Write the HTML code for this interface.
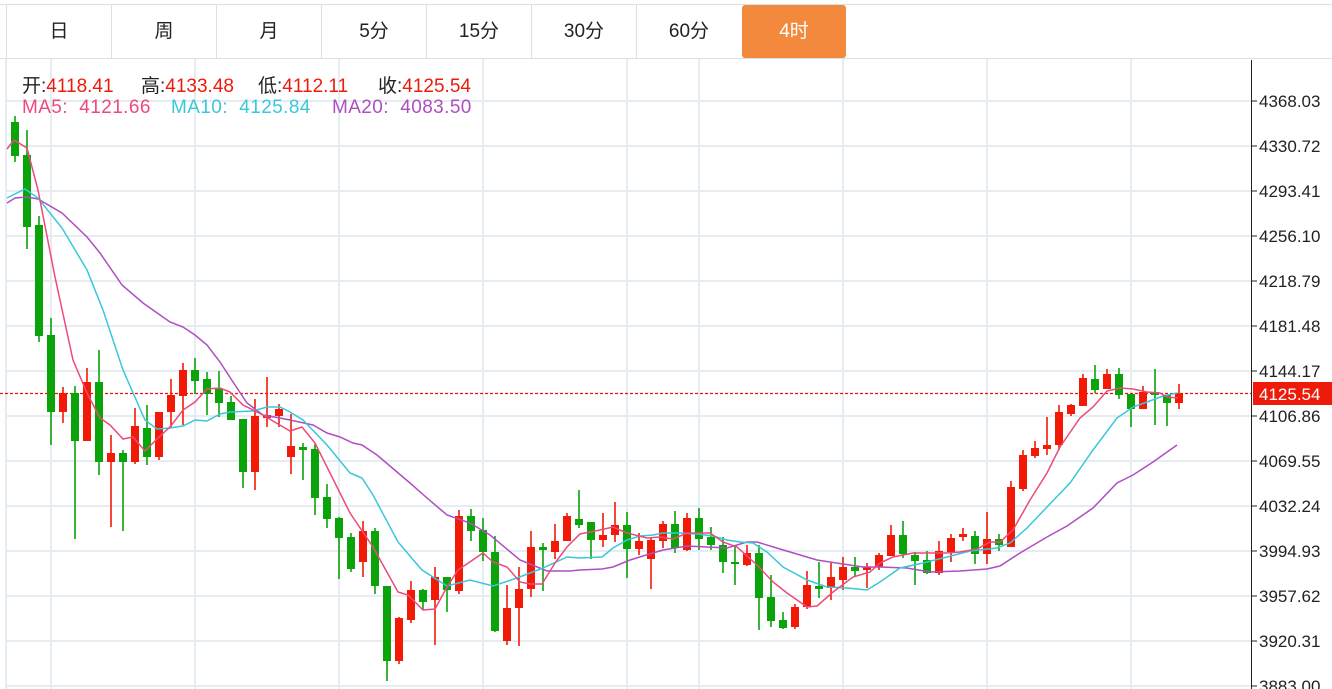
<!DOCTYPE html>
<html><head><meta charset="utf-8"><style>
html,body{margin:0;padding:0;background:#fff;width:1332px;height:689px;overflow:hidden;font-family:"Liberation Sans","Noto Sans CJK SC",sans-serif;}
.tabs{position:absolute;left:0;top:4px;width:1332px;height:53px;border-top:1px solid #dcdfe3;border-bottom:1px solid #dcdfe3;}
.tab{position:absolute;top:0;height:53px;width:104px;border-left:1px solid #dcdfe3;text-align:center;line-height:53px;font-size:19px;color:#222;}
.tab.on{background:#f2893c;color:#fff;border-left:none;border-radius:3px;}
.lg{position:absolute;font-size:19px;white-space:nowrap;}
.k{color:#222}.v{color:#ee1b0b}
svg{position:absolute;left:0;top:0}
.ax{font-family:"Liberation Sans",sans-serif;font-size:17px;fill:#222}
</style></head><body>
<svg width="1332" height="689">
<g stroke="#e5ecf2" stroke-width="2">
<line x1="51" y1="58" x2="51" y2="689"/><line x1="195" y1="58" x2="195" y2="689"/><line x1="339" y1="58" x2="339" y2="689"/><line x1="483" y1="58" x2="483" y2="689"/><line x1="627" y1="58" x2="627" y2="689"/><line x1="699" y1="58" x2="699" y2="689"/><line x1="843" y1="58" x2="843" y2="689"/><line x1="987" y1="58" x2="987" y2="689"/><line x1="1131" y1="58" x2="1131" y2="689"/>
<line x1="6" y1="58" x2="6" y2="689"/>
<line x1="6" y1="101" x2="1251" y2="101"/><line x1="6" y1="146" x2="1251" y2="146"/><line x1="6" y1="191" x2="1251" y2="191"/><line x1="6" y1="236" x2="1251" y2="236"/><line x1="6" y1="281" x2="1251" y2="281"/><line x1="6" y1="326" x2="1251" y2="326"/><line x1="6" y1="371" x2="1251" y2="371"/><line x1="6" y1="416" x2="1251" y2="416"/><line x1="6" y1="461" x2="1251" y2="461"/><line x1="6" y1="506" x2="1251" y2="506"/><line x1="6" y1="551" x2="1251" y2="551"/><line x1="6" y1="596" x2="1251" y2="596"/><line x1="6" y1="641" x2="1251" y2="641"/><line x1="6" y1="686" x2="1251" y2="686"/>
</g>
<line x1="1251.5" y1="60" x2="1251.5" y2="689" stroke="#222" stroke-width="1"/>
<path stroke="#222" stroke-width="1" d="M1251 101h6M1251 146h6M1251 191h6M1251 236h6M1251 281h6M1251 326h6M1251 371h6M1251 416h6M1251 461h6M1251 506h6M1251 551h6M1251 596h6M1251 641h6M1251 686h6"/>
<g class="ax">
<text x="1259" y="107">4368.03</text><text x="1259" y="152">4330.72</text><text x="1259" y="197">4293.41</text><text x="1259" y="242">4256.10</text><text x="1259" y="287">4218.79</text><text x="1259" y="332">4181.48</text><text x="1259" y="377">4144.17</text><text x="1259" y="422">4106.86</text><text x="1259" y="467">4069.55</text><text x="1259" y="512">4032.24</text><text x="1259" y="557">3994.93</text><text x="1259" y="602">3957.62</text><text x="1259" y="647">3920.31</text><text x="1259" y="692">3883.00</text>
</g>
<line x1="0" y1="393.5" x2="1251" y2="393.5" stroke="#f01000" stroke-width="1.2" stroke-dasharray="3,2"/>
<rect x="1253" y="382" width="79" height="23" fill="#ee1b0b"/>
<text x="1259" y="400" style="font-size:17px;fill:#fff;font-family:'Liberation Sans',sans-serif">4125.54</text>

<g fill="#0aa30a">
<path stroke="#0aa30a" stroke-width="1.6" fill="none" d="M15 116V162M27 130V249M39 216V342M51 318V445M75 386V539M99 350V475M123 450V531M147 405V465M195 358V394M207 372V415M219 371V417M231 396V420M243 419V488M303 443V480M315 444V515M327 484V528M339 517V579M351 533V572M375 528V594M387 586V681M423 589V610M447 577V612M471 509V541M483 518V561M495 536V632M543 543V591M579 490V528M591 522V559M627 512V578M675 511V553M699 508V550M711 527V550M723 537V573M735 545V585M759 545V630M771 575V627M783 612V629M819 562V598M855 557V577M903 521V558M915 552V585M927 551V574M975 531V564M999 534V551M1095 365V393M1119 368V399M1131 394V427M1155 369V425M1167 395V426"/>
<rect x="11" y="122" width="8" height="34"/><rect x="23" y="155" width="8" height="72"/><rect x="35" y="225" width="8" height="111"/><rect x="47" y="335" width="8" height="77"/><rect x="71" y="393" width="8" height="48"/><rect x="95" y="382" width="8" height="80"/><rect x="119" y="453" width="8" height="9"/><rect x="143" y="428" width="8" height="29"/><rect x="191" y="370" width="8" height="11"/><rect x="203" y="379" width="8" height="15"/><rect x="215" y="389" width="8" height="14"/><rect x="227" y="402" width="8" height="18"/><rect x="239" y="419" width="8" height="53"/><rect x="299" y="447" width="8" height="3"/><rect x="311" y="449" width="8" height="49"/><rect x="323" y="497" width="8" height="22"/><rect x="335" y="518" width="8" height="20"/><rect x="347" y="537" width="8" height="32"/><rect x="371" y="531" width="8" height="55"/><rect x="383" y="586" width="8" height="75"/><rect x="419" y="590" width="8" height="12"/><rect x="443" y="577" width="8" height="13"/><rect x="467" y="516" width="8" height="15"/><rect x="479" y="530" width="8" height="22"/><rect x="491" y="552" width="8" height="79"/><rect x="539" y="547" width="8" height="3"/><rect x="575" y="519" width="8" height="6"/><rect x="587" y="522" width="8" height="18"/><rect x="623" y="525" width="8" height="24"/><rect x="671" y="524" width="8" height="24"/><rect x="695" y="518" width="8" height="21"/><rect x="707" y="537" width="8" height="8"/><rect x="719" y="545" width="8" height="17"/><rect x="731" y="562" width="8" height="2"/><rect x="755" y="553" width="8" height="45"/><rect x="767" y="597" width="8" height="24"/><rect x="779" y="620" width="8" height="8"/><rect x="815" y="586" width="8" height="3"/><rect x="851" y="567" width="8" height="4"/><rect x="899" y="535" width="8" height="19"/><rect x="911" y="555" width="8" height="6"/><rect x="923" y="560" width="8" height="13"/><rect x="971" y="536" width="8" height="18"/><rect x="995" y="539" width="8" height="6"/><rect x="1091" y="379" width="8" height="11"/><rect x="1115" y="374" width="8" height="21"/><rect x="1127" y="394" width="8" height="15"/><rect x="1151" y="392" width="8" height="3"/><rect x="1163" y="395" width="8" height="8"/>
</g>
<g fill="#f21a06">
<path stroke="#f21a06" stroke-width="1.6" fill="none" d="M63 387V423M87 368V441M111 435V527M135 408V464M159 412V460M171 379V427M183 363V425M255 399V490M267 377V427M279 404V427M291 414V474M363 521V577M399 617V664M411 581V623M435 567V645M459 510V594M507 585V645M519 567V646M531 531V597M555 524V559M567 513V541M603 513V547M615 502V542M639 533V555M651 537V589M663 521V548M687 513V551M747 545V566M795 604V629M807 571V609M831 563V600M843 557V590M867 563V588M879 553V570M891 525V556M939 541V575M951 534V562M963 528V541M987 512V564M1011 481V547M1023 450V491M1035 441V458M1047 417V455M1059 405V450M1071 404V416M1083 374V406M1107 369V389M1143 386V409M1179 384V409"/>
<rect x="59" y="393" width="8" height="19"/><rect x="83" y="382" width="8" height="59"/><rect x="107" y="453" width="8" height="9"/><rect x="131" y="426" width="8" height="36"/><rect x="155" y="412" width="8" height="45"/><rect x="167" y="395" width="8" height="17"/><rect x="179" y="370" width="8" height="26"/><rect x="251" y="416" width="8" height="56"/><rect x="263" y="415" width="8" height="3"/><rect x="275" y="409" width="8" height="7"/><rect x="287" y="446" width="8" height="11"/><rect x="359" y="531" width="8" height="31"/><rect x="395" y="618" width="8" height="43"/><rect x="407" y="590" width="8" height="30"/><rect x="431" y="577" width="8" height="23"/><rect x="455" y="516" width="8" height="75"/><rect x="503" y="608" width="8" height="33"/><rect x="515" y="589" width="8" height="19"/><rect x="527" y="547" width="8" height="42"/><rect x="551" y="541" width="8" height="11"/><rect x="563" y="516" width="8" height="25"/><rect x="599" y="535" width="8" height="5"/><rect x="611" y="525" width="8" height="10"/><rect x="635" y="541" width="8" height="8"/><rect x="647" y="540" width="8" height="19"/><rect x="659" y="524" width="8" height="17"/><rect x="683" y="518" width="8" height="32"/><rect x="743" y="553" width="8" height="12"/><rect x="791" y="607" width="8" height="20"/><rect x="803" y="585" width="8" height="22"/><rect x="827" y="577" width="8" height="11"/><rect x="839" y="567" width="8" height="13"/><rect x="863" y="567" width="8" height="3"/><rect x="875" y="555" width="8" height="12"/><rect x="887" y="535" width="8" height="21"/><rect x="935" y="551" width="8" height="22"/><rect x="947" y="538" width="8" height="14"/><rect x="959" y="534" width="8" height="3"/><rect x="983" y="539" width="8" height="15"/><rect x="1007" y="487" width="8" height="60"/><rect x="1019" y="455" width="8" height="34"/><rect x="1031" y="448" width="8" height="8"/><rect x="1043" y="445" width="8" height="4"/><rect x="1055" y="412" width="8" height="33"/><rect x="1067" y="405" width="8" height="9"/><rect x="1079" y="378" width="8" height="28"/><rect x="1103" y="374" width="8" height="15"/><rect x="1139" y="392" width="8" height="17"/><rect x="1175" y="394" width="8" height="9"/>
</g>

<g fill="none" stroke-width="1.5">
<polyline stroke="#ae4fc0" points="7,203 15,198 27,197 38,199 62,213 87,237 100,253 122,285 143,303 170,322 183,327 195,335 207,345 220,362 233,382 247,403 263,415 280,418 290,420 313,425 327,433 340,437 353,443 362,445 377,455 397,472 410,483 427,498 447,515 470,523 490,535 520,560 547,571 570,571 580,570 602,569 613,567 630,560 643,556 663,550 687,546 707,547 727,548 747,542 757,542 780,549 817,560 843,564 863,567 880,567 907,568 930,572 960,571 987,569 1000,566 1020,553 1047,537 1067,526 1093,508 1117,483 1133,475 1153,462 1177,445"/>
<polyline stroke="#39c7dc" points="7,198 25,189 38,198 62,228 87,270 103,310 123,370 145,420 157,429 170,428 183,426 195,420 207,421 220,414 230,412 253,411 267,407 280,407 290,412 303,420 327,445 350,473 362,478 373,495 398,542 422,570 447,586 470,580 493,586 517,578 543,568 567,557 580,558 602,557 613,548 627,540 640,536 653,535 663,533 680,533 697,534 713,536 727,540 740,542 753,543 767,552 783,567 807,580 827,587 847,588 867,590 880,582 900,568 923,563 947,557 970,551 997,548 1010,543 1027,528 1047,507 1070,483 1093,450 1117,418 1133,407 1147,402 1163,396 1177,393"/>
<polyline stroke="#ec4a7b" points="7,149 14,140 27,148 38,190 55,277 73,360 87,393 100,418 110,425 123,439 133,437 145,451 158,438 170,427 183,410 195,402 207,389 220,388 230,392 243,405 263,415 278,424 290,431 302,427 315,443 350,513 373,547 398,592 408,595 423,610 435,609 447,587 458,570 483,553 493,562 507,567 520,582 530,584 542,584 555,563 567,547 580,534 600,530 613,527 627,533 647,538 660,537 673,539 687,533 710,533 723,542 737,547 757,565 773,582 787,593 807,607 817,606 833,592 853,577 870,572 880,563 893,557 913,553 947,553 960,552 977,549 990,542 1000,542 1013,530 1030,500 1047,473 1060,447 1080,418 1093,407 1107,391 1120,388 1133,389 1147,392 1160,393 1167,397 1178,398"/>
</g>
</svg>
<div class="tabs">
<div class="tab" style="left:6px">日</div>
<div class="tab" style="left:111px">周</div>
<div class="tab" style="left:216px">月</div>
<div class="tab" style="left:321px">5分</div>
<div class="tab" style="left:426px">15分</div>
<div class="tab" style="left:531px">30分</div>
<div class="tab" style="left:636px">60分</div>
<div class="tab on" style="left:742px">4时</div>
</div>
<div class="lg" style="left:22px;top:71px"><span class="k">开:</span><span class="v">4118.41</span></div>
<div class="lg" style="left:141px;top:71px"><span class="k">高:</span><span class="v">4133.48</span></div>
<div class="lg" style="left:258px;top:71px"><span class="k">低:</span><span class="v">4112.11</span></div>
<div class="lg" style="left:378px;top:71px"><span class="k">收:</span><span class="v">4125.54</span></div>
<div class="lg" style="left:22px;top:97px;color:#ec4a7b;letter-spacing:0.4px">MA5:&nbsp; 4121.66</div>
<div class="lg" style="left:171px;top:97px;color:#39c7dc;letter-spacing:0.4px">MA10:&nbsp; 4125.84</div>
<div class="lg" style="left:332px;top:97px;color:#ae4fc0;letter-spacing:0.4px">MA20:&nbsp; 4083.50</div>
</body></html>
